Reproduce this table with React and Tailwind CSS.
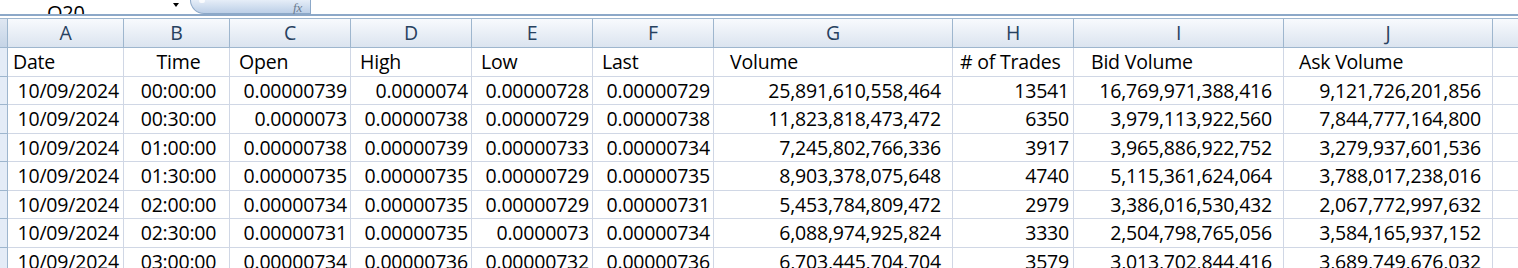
import React from 'react';

const cols = [
  { key: 'A', w: 116, head: 'Date', hAlign: 'justify-start pl-[5px]', vAlign: 'justify-end pr-[4px]' },
  { key: 'B', w: 106, head: 'Time', hAlign: 'justify-center pl-[4px]', vAlign: 'justify-center pl-[4px]' },
  { key: 'C', w: 121, head: 'Open', hAlign: 'justify-start pl-[9px]', vAlign: 'justify-end pr-[3px]' },
  { key: 'D', w: 121, head: 'High', hAlign: 'justify-start pl-[9px]', vAlign: 'justify-end pr-[3px]' },
  { key: 'E', w: 121, head: 'Low', hAlign: 'justify-start pl-[9px]', vAlign: 'justify-end pr-[3px]' },
  { key: 'F', w: 121, head: 'Last', hAlign: 'justify-start pl-[9px]', vAlign: 'justify-end pr-[3px]' },
  { key: 'G', w: 239, head: 'Volume', hAlign: 'justify-start pl-[16px]', vAlign: 'justify-end pr-[11px]' },
  { key: 'H', w: 121, head: '# of Trades', hAlign: 'justify-start pl-[7px]', vAlign: 'justify-end pr-[4px]' },
  { key: 'I', w: 210, head: 'Bid Volume', hAlign: 'justify-start pl-[17px]', vAlign: 'justify-end pr-[11px]' },
  { key: 'J', w: 209, head: 'Ask Volume', hAlign: 'justify-start pl-[15px]', vAlign: 'justify-end pr-[11px]' },
];

const rows = [
  ['10/09/2024', '00:00:00', '0.00000739', '0.0000074', '0.00000728', '0.00000729', '25,891,610,558,464', '13541', '16,769,971,388,416', '9,121,726,201,856'],
  ['10/09/2024', '00:30:00', '0.0000073', '0.00000738', '0.00000729', '0.00000738', '11,823,818,473,472', '6350', '3,979,113,922,560', '7,844,777,164,800'],
  ['10/09/2024', '01:00:00', '0.00000738', '0.00000739', '0.00000733', '0.00000734', '7,245,802,766,336', '3917', '3,965,886,922,752', '3,279,937,601,536'],
  ['10/09/2024', '01:30:00', '0.00000735', '0.00000735', '0.00000729', '0.00000735', '8,903,378,075,648', '4740', '5,115,361,624,064', '3,788,017,238,016'],
  ['10/09/2024', '02:00:00', '0.00000734', '0.00000735', '0.00000729', '0.00000731', '5,453,784,809,472', '2979', '3,386,016,530,432', '2,067,772,997,632'],
  ['10/09/2024', '02:30:00', '0.00000731', '0.00000735', '0.0000073', '0.00000734', '6,088,974,925,824', '3330', '2,504,798,765,056', '3,584,165,937,152'],
  ['10/09/2024', '03:00:00', '0.00000734', '0.00000736', '0.00000732', '0.00000736', '6,703,445,704,704', '3579', '3,013,702,844,416', '3,689,749,676,032'],
];

const Row = ({ cells, aligns }) => (
  <div className="flex h-[28.5px] shrink-0">
    <div className="w-[8px] shrink-0 bg-[#e4ecf7] border-r border-b border-[#9eb6ce]" />
    {cols.map((c, i) => (
      <div
        key={c.key}
        style={{ width: c.w }}
        className={`shrink-0 flex items-center overflow-hidden whitespace-nowrap border-r border-b border-[#d0d7e5] ${aligns(c)}`}
      >
        {cells[i]}
      </div>
    ))}
    <div className="flex-1 border-b border-[#d0d7e5]" />
  </div>
);

export default function App() {
  return (
    <div className="w-[1518px] h-[268px] overflow-hidden bg-white flex flex-col text-black text-[19.5px] tracking-[-0.2px] font-['Open_Sans',sans-serif]">
      {/* formula bar, cut off at top */}
      <div className="h-[14px] shrink-0 relative flex items-end overflow-hidden">
        <div className="w-[180px] h-[14px] relative">
          <span className="absolute left-[47px] bottom-[-9px] leading-none text-[20px]">O20</span>
          <span className="absolute left-[173px] top-[3px] w-0 h-0 border-l-[3px] border-r-[3px] border-t-[4px] border-l-transparent border-r-transparent border-t-black" />
        </div>
        <div className="ml-[10px] w-[121px] h-[15px] -mt-[1px] rounded-bl-[14px] border border-t-0 border-[#8ca8c8] bg-gradient-to-b from-[#e9f0f9] to-[#bccfe7] relative">
          <span className="absolute right-[8px] bottom-[-1px] italic text-[13px] text-[#6b7b8f] font-['Liberation_Serif',serif] leading-none">fx</span>
          <span className="absolute left-[8px] top-[0px] w-[6px] h-[4px] rounded-full bg-white opacity-80" />
        </div>
      </div>
      <div className="h-[2px] shrink-0 bg-[#8ca8c8]" />
      <div className="h-[2px] shrink-0 bg-white" />

      {/* column headers */}
      <div className="flex h-[30px] shrink-0 border-t border-b border-[#9eb6ce] bg-gradient-to-b from-[#f8fafd] to-[#dbe4ef]">
        <div className="w-[8px] shrink-0 border-r border-[#9eb6ce] bg-gradient-to-b from-[#dfe7f2] to-[#c5d4e6]" />
        {cols.map((c) => (
          <div
            key={c.key}
            style={{ width: c.w }}
            className="shrink-0 flex items-center justify-center border-r border-[#9eb6ce] text-[#27415f]"
          >
            {c.key}
          </div>
        ))}
        <div className="flex-1" />
      </div>

      <Row cells={cols.map((c) => c.head)} aligns={(c) => c.hAlign} />
      {rows.map((r, i) => (
        <Row key={i} cells={r} aligns={(c) => c.vAlign} />
      ))}
    </div>
  );
}
